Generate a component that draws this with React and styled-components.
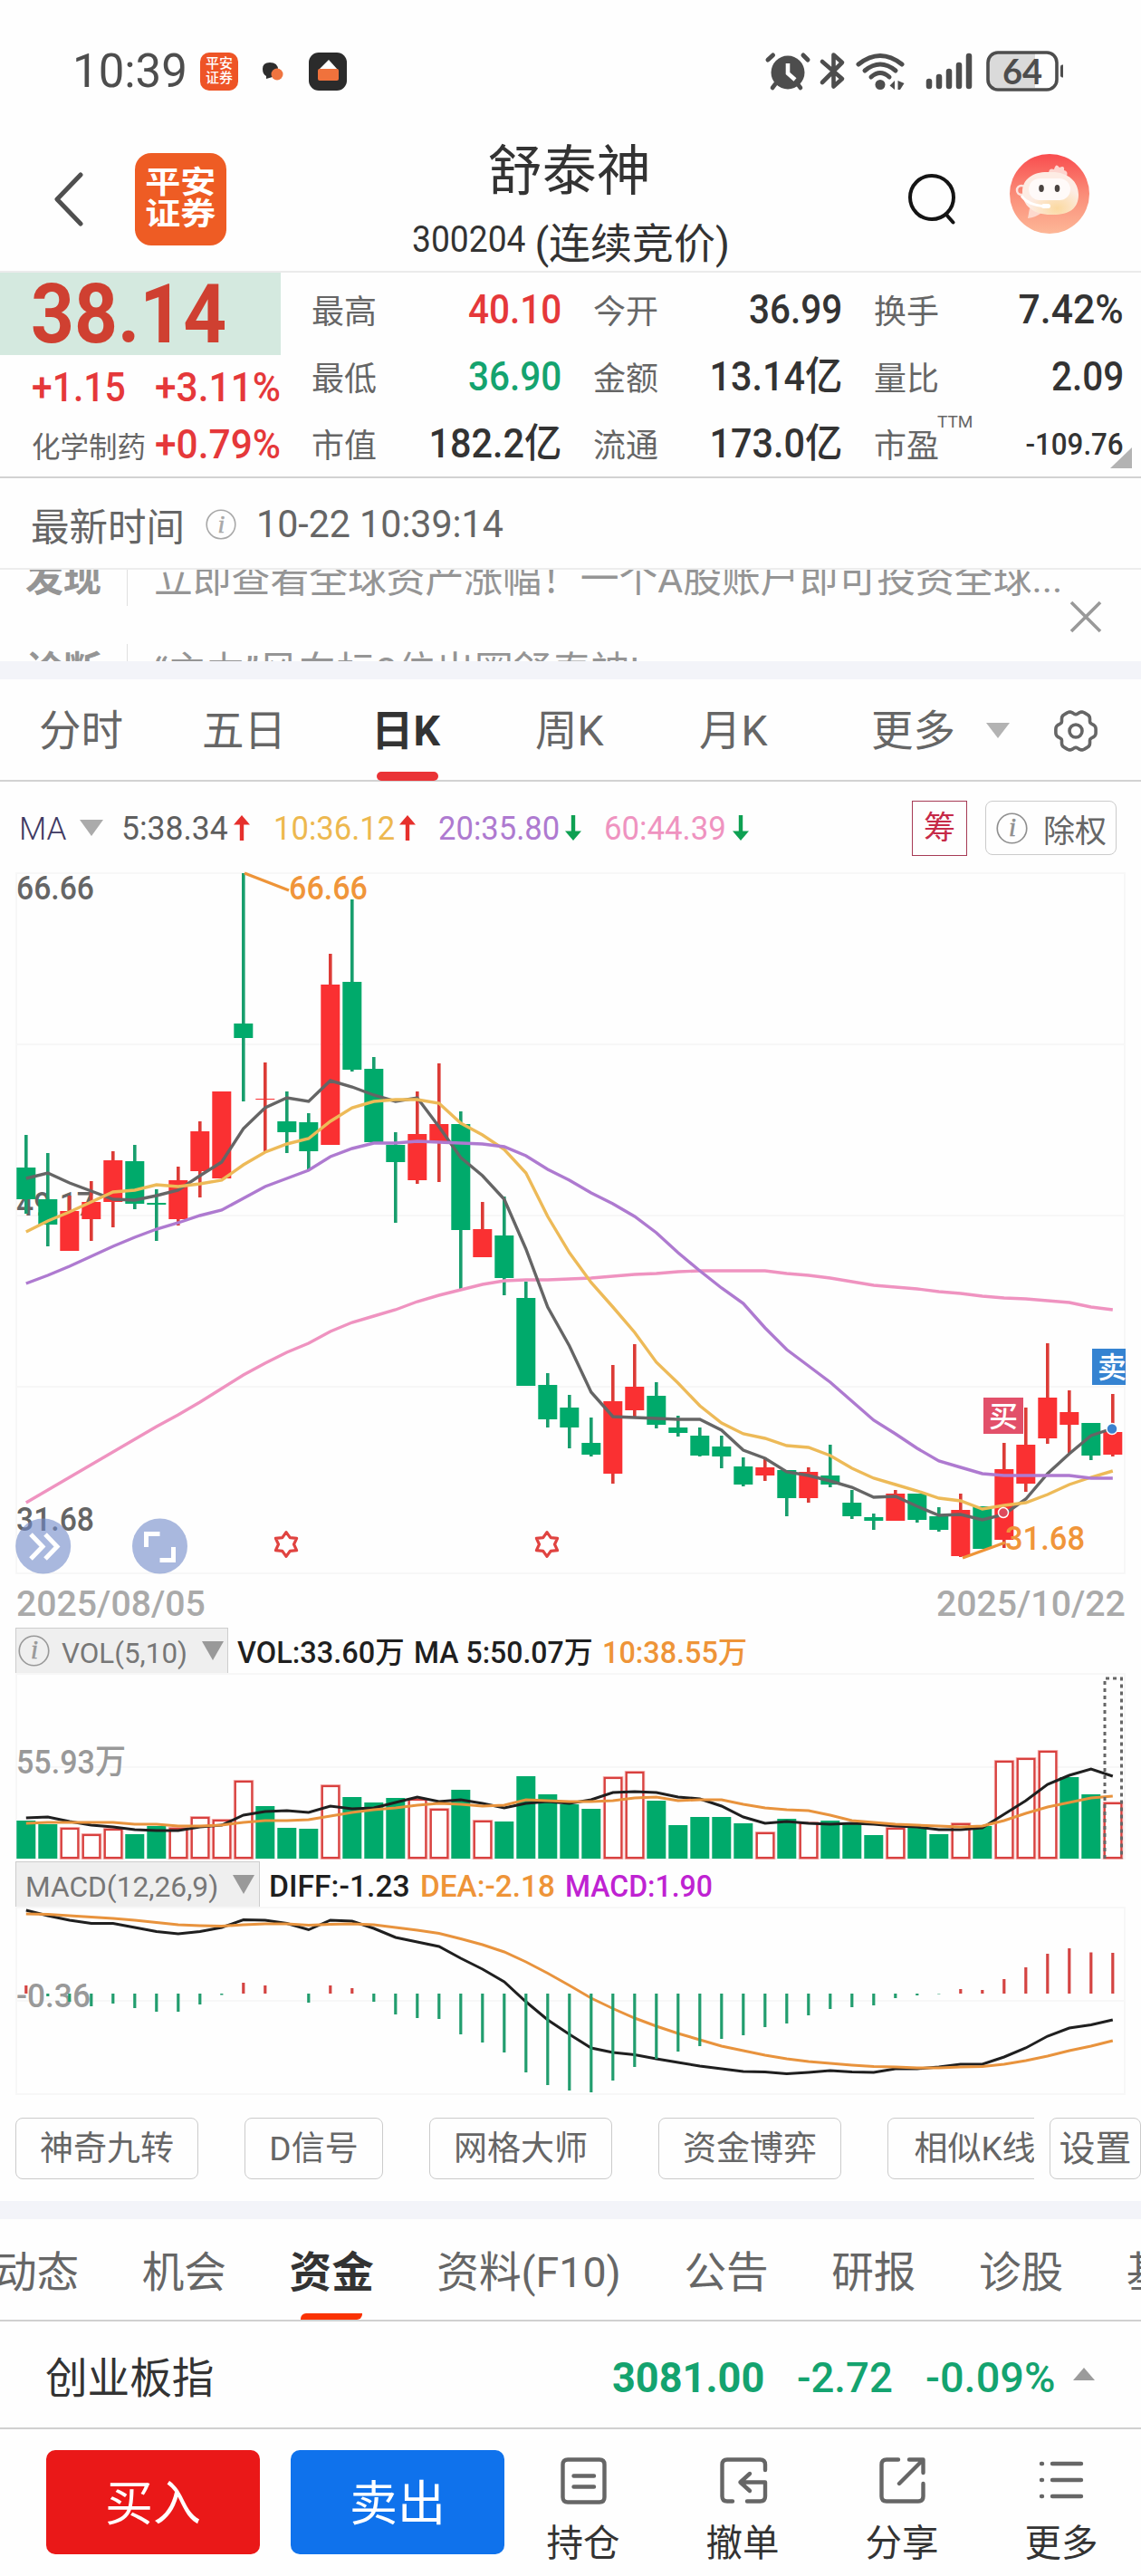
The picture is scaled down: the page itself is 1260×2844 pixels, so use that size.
import React from "react";
import styled, { createGlobalStyle } from "styled-components";

const GlobalStyle = createGlobalStyle`
  * {
    box-sizing: border-box;
  }

  body {
    margin: 0;
    background: #fefefe;
    font-family: Roboto, "Noto Sans CJK SC", sans-serif;
    color: #333;
    -webkit-font-smoothing: antialiased;
  }

  svg {
    display: block;
    flex-shrink: 0;
  }
`;

const UP = "#fa3032";
const DOWN = "#00aa6b";

const Screen = styled.div`
  width: 1260px;
  height: 2844px;
  overflow: hidden;
  display: flex;
  flex-direction: column;
  background: #fefefe;
  white-space: nowrap;

  & > * {
    flex-shrink: 0;
  }
`;

// Digits are drawn a little condensed, so the box is scaled from one side
const Figure = styled.span`
  display: inline-block;
  font-size: ${(p) => p.$size || 44}px;
  font-weight: ${(p) => p.$weight || 500};
  line-height: 1;
  color: ${(p) => p.$color || "#333"};
  transform: scaleX(${(p) => p.$fit || 0.92});
  transform-origin: ${(p) => p.$from || "left"} center;
`;

/* ---------- status bar ---------- */

const StatusBar = styled.div`
  height: 140px;
  padding: 18px 86px 0 80px;
  display: flex;
  align-items: center;
`;

const Clock = styled.div`
  width: 141px;
  font-size: 52px;
  line-height: 1;
  color: #4d4d4d;
`;

const AppIcons = styled.div`
  display: flex;
  gap: 18px;
  flex: 1;
`;

const AppBadge = styled.div`
  width: 42px;
  height: 42px;
  border-radius: 10px;
  padding-top: 4px;
  background: #ee5426;
  color: #fff;
  font-size: 15px;
  line-height: 16px;
  font-weight: 500;
  text-align: center;
`;

/* ---------- header ---------- */

const Header = styled.header`
  height: 161px;
  display: flex;
  align-items: center;
  border-bottom: 2px solid #ebebeb;
  padding: 0 57px 0 58px;
`;

const Logo = styled.div`
  width: 101px;
  height: 102px;
  margin-left: 56px;
  border-radius: 18px;
  background: #ee5c24;
  display: flex;
  align-items: center;
  justify-content: center;

  span {
    font-size: 39px;
    line-height: 41px;
    font-weight: 700;
    color: #fff;
    text-align: center;
    transform: scaleY(0.86);
  }
`;

const TitleBlock = styled.div`
  width: 756px;
  padding: 10px 0 0 5px;
  display: flex;
  flex-direction: column;
  align-items: center;
`;

const StockName = styled.h1`
  margin: 0;
  font-size: 60px;
  font-weight: 400;
  line-height: 80px;
  color: #333;
`;

const StockCode = styled.div`
  display: flex;
  align-items: center;
  height: 70px;
  font-size: 46px;
  padding-left: 4px;
  color: #333;
`;

const HeaderActions = styled.div`
  display: flex;
  align-items: center;
  gap: 58px;
`;

const AvatarBox = styled.div`
  padding-bottom: 11px;
`;

/* ---------- quote ---------- */

const Quote = styled.section`
  height: 227px;
  display: flex;
  border-bottom: 2px solid #d2d2d2;
`;

const PriceColumn = styled.div`
  width: 310px;
  display: flex;
  flex-direction: column;
`;

const Price = styled.div`
  height: 91px;
  padding: 3px 0 0 34px;
  display: flex;
  align-items: center;
  background: #d4e9df;
`;

const PriceLine = styled.div`
  display: flex;
  align-items: center;
  justify-content: space-between;
  height: ${(p) => p.$height}px;
  padding-left: 35px;
  font-size: 31.5px;
  color: #666;
`;

const Facts = styled.div`
  flex: 1;
  padding: 4px 19px 0 34px;
  display: grid;
  grid-template-columns: 276px 275px 276px;
  column-gap: 35px;
  grid-auto-rows: 74px;
`;

const Fact = styled.div`
  display: flex;
  align-items: center;
  justify-content: space-between;
`;

const FactLabel = styled.span`
  position: relative;
  font-size: 36px;
  color: #666;
  padding-bottom: 2px;
`;

const Superscript = styled.span`
  position: absolute;
  left: 70px;
  top: -9px;
  font-size: 19px;
`;

const Corner = styled.div`
  position: absolute;
  left: 1226px;
  top: 494px;
  border-left: 24px solid transparent;
  border-bottom: 23px solid #b3b3b3;
`;

const TimeRow = styled.div`
  height: 101px;
  display: flex;
  align-items: center;
  padding: 2px 0 0 34px;
  font-size: 42.5px;
  color: #666;
  border-bottom: 2px solid #ededed;
`;

/* ---------- notices ---------- */

const Notices = styled.div`
  height: 101px;
  overflow: hidden;
  display: flex;
  justify-content: space-between;
  color: #959595;
  font-size: 42.8px;
`;

const NoticeList = styled.div`
  margin-top: -41px;
`;

const Notice = styled.div`
  height: 102px;
  padding-left: 28px;
  display: flex;
  align-items: center;
  line-height: 80px;

  b {
    width: 112px;
    font-size: 42px;
    line-height: 60px;
  }

  span {
    border-left: 1px solid #e0e0e0;
    line-height: 60px;
    padding-left: 29px;
  }
`;

const CloseBox = styled.div`
  padding: 34px 43px 0 0;
`;

const Band = styled.div`
  height: ${(p) => p.$height || 20}px;
  background: #f3f4f9;
`;

/* ---------- period tabs ---------- */

const PeriodTabs = styled.nav`
  height: 113px;
  display: flex;
  border-bottom: 2px solid #d2d2d2;
  padding: 2px 0 0 43px;
  align-items: center;
`;

const PeriodTab = styled.div`
  position: relative;
  width: ${(p) => p.$width}px;
  font-size: 46.5px;
  line-height: 60px;
  color: ${(p) => (p.$active ? "#333" : "#666")};
  font-weight: ${(p) => (p.$active ? 700 : 400)};

  &::after {
    content: "";
    display: ${(p) => (p.$active ? "block" : "none")};
    position: absolute;
    left: 6px;
    bottom: -25px;
    width: 68px;
    height: 10px;
    border-radius: 5px;
    background: #ea3336;
  }
`;

const Triangle = styled.i`
  border: ${(p) => p.$half || 13}px solid transparent;
  border-bottom-width: 0;
  border-top: ${(p) => p.$tall || 17}px solid ${(p) => p.$color || "#b3b3b3"};
`;

/* ---------- moving averages ---------- */

const MaRow = styled.div`
  height: 101px;
  display: flex;
  align-items: center;
  padding: 1px 27px 0 21px;
`;

const MaName = styled.div`
  width: 67px;
  padding-top: 2px;
  font-size: 35px;
  font-weight: 300;
  color: #3f3a63;
`;

const MaItem = styled.div`
  display: flex;
  align-items: center;
  width: ${(p) => p.$width}px;

  span {
    width: ${(p) => p.$text}px;
  }
`;

const ChipButton = styled.div`
  margin-left: auto;
  width: 61px;
  height: 61px;
  border: 1.5px solid #a63a55;
  color: #c62a48;
  font-size: 35px;
  line-height: 59px;
  text-align: center;
`;

const AdjustButton = styled.div`
  margin-left: 20px;
  width: 145px;
  height: 60px;
  border: 1.5px solid #cbcbcb;
  border-radius: 8px;
  display: flex;
  align-items: center;
  justify-content: space-between;
  padding: 0 10px 0 11px;
  font-size: 35px;
  color: #666;
`;

/* ---------- charts ---------- */

const ChartBox = styled.div`
  height: ${(p) => p.$height}px;
  padding-left: 18px;
`;

const DateRow = styled.div`
  height: 60px;
  padding: 8px 17px 0 18px;
  display: flex;
  align-items: center;
  justify-content: space-between;
`;

const IndicatorRow = styled.div`
  height: 51px;
  padding-left: 17px;
  display: flex;
  align-items: center;
  margin-top: ${(p) => p.$top || 0}px;
`;

const IndicatorPicker = styled.div`
  width: ${(p) => p.$width}px;
  height: 51px;
  border: 1px solid #cdcdcd;
  background: #efefef;
  display: flex;
  align-items: center;
  padding-left: ${(p) => p.$pad}px;
  margin-right: 10px;
`;

const PickerText = styled.div`
  width: ${(p) => p.$width}px;
  height: 36px;
  padding-top: 4px;
`;

const IndicatorText = styled.div`
  width: ${(p) => p.$width}px;
  padding-top: 4px;
`;

/* ---------- tool buttons ---------- */

const Tools = styled.div`
  height: 118px;
  padding: 26px 0 0 17px;
  display: flex;
`;

const ToolList = styled.div`
  width: 1125px;
  overflow: hidden;
  display: flex;
  gap: 51px;
`;

const Tool = styled.div`
  height: 68px;
  flex: none;
  width: ${(p) => p.$width}px;
  border: 1.5px solid #cbcbcb;
  border-radius: 8px;
  font-size: 37px;
  line-height: 67px;
  text-align: center;
  color: #666;
`;

const SettingTool = styled(Tool)`
  margin-left: 17px;
  font-size: 40px;
`;

/* ---------- content tabs ---------- */

const ContentTabs = styled.nav`
  height: 113px;
  display: flex;
  align-items: center;
  gap: 69.6px;
  padding-top: 6px;
  margin-left: -6px;
  border-bottom: 2px solid #d0d0d0;
`;

const ContentTab = styled.div`
  position: relative;
  flex: none;
  font-size: 46.6px;
  line-height: 60px;
  color: ${(p) => (p.$active ? "#333" : "#666")};
  font-weight: ${(p) => (p.$active ? 700 : 400)};

  &::after {
    content: "";
    display: ${(p) => (p.$active ? "block" : "none")};
    position: absolute;
    left: 12px;
    bottom: -22px;
    width: 68px;
    height: 7px;
    border-radius: 6px 0 6px 0;
    background: #fa3203;
  }
`;

const IndexRow = styled.div`
  height: 119px;
  display: flex;
  align-items: center;
  padding: 0 51px 0 50px;
  border-bottom: 2px solid #d0d0d0;
  font-size: 46.6px;
`;

const IndexFigures = styled.div`
  margin-left: auto;
  display: flex;
  align-items: center;
  padding-top: 6px;
`;

const FigureSlot = styled.div`
  width: ${(p) => p.$width}px;
`;

const UpTriangle = styled.i`
  border: 12px solid transparent;
  border-top-width: 0;
  border-bottom: 14px solid #9b9b9b;
  margin-bottom: 8px;
`;

/* ---------- bottom bar ---------- */

const BottomBar = styled.footer`
  height: 162px;
  display: flex;
  padding: 23px 0 0 51px;
`;

const TradeButton = styled.div`
  width: 236px;
  height: 115px;
  margin-right: 34px;
  border-radius: 10px;
  background: ${(p) => p.$color};
  color: #fff;
  font-size: 53px;
  line-height: 121px;
  text-align: center;
`;

const Action = styled.div`
  width: 176px;
  display: flex;
  flex-direction: column;
  align-items: center;
  font-size: 40.5px;
  line-height: 60px;
  gap: 11px;
  padding-top: 8px;
`;

const Actions = styled.div`
  display: flex;
  margin-left: -35px;
`;

/* ---------- data ---------- */

// [up, high, low, bodyTop, bodyBottom], measured down from the top grid line
const candles = [
  [0, 289, 376, 325, 360], [0, 309, 412, 360, 388], [1, 356, 417, 373, 417], [1, 340, 406, 363, 382],
  [1, 307, 391, 317, 363], [0, 300, 371, 318, 365], [0, 349, 406, 364, 366], [1, 324, 389, 339, 382],
  [1, 274, 358, 285, 329], [1, 241, 337, 241, 337], [0, 0, 252, 166, 182], [1, 209, 308, 249, 250],
  [0, 241, 309, 274, 286], [0, 265, 328, 275, 307], [1, 89, 300, 123, 300], [0, 29, 219, 120, 217],
  [0, 203, 297, 216, 297], [0, 286, 386, 300, 319], [1, 241, 343, 288, 339], [1, 210, 341, 277, 298],
  [0, 263, 459, 277, 394], [1, 363, 424, 393, 424], [0, 357, 466, 400, 447], [0, 451, 566, 469, 566],
  [0, 552, 612, 565, 603], [0, 576, 635, 590, 612], [0, 601, 644, 629, 642], [1, 543, 674, 583, 663],
  [1, 520, 602, 567, 593], [0, 562, 613, 577, 609], [0, 599, 622, 612, 618], [0, 612, 644, 621, 643],
  [0, 621, 657, 633, 644], [0, 645, 677, 655, 675], [1, 645, 671, 656, 665], [0, 659, 710, 659, 690],
  [1, 656, 695, 661, 690], [0, 631, 678, 665, 675], [0, 681, 713, 695, 710], [0, 707, 725, 711, 715],
  [1, 681, 715, 685, 715], [0, 685, 717, 685, 714], [0, 700, 727, 710, 725], [1, 685, 755, 703, 754],
  [0, 699, 746, 699, 746], [1, 629, 745, 658, 736], [1, 590, 683, 631, 674], [1, 519, 630, 579, 624],
  [1, 571, 640, 595, 609], [0, 607, 648, 607, 643], [1, 575, 644, 617, 642],
];

const averages = [
  {
    color: "#ef93c0",
    values: [695, 681, 667, 653, 639, 625, 611, 598, 584, 569, 554, 541, 529, 519, 506, 496, 489, 482, 473, 466, 460, 454, 450, 449, 449, 448, 447, 445, 443, 442, 440, 439, 439, 439, 439, 442, 444, 447, 451, 455, 457, 459, 462, 464, 467, 469, 470, 472, 474, 479, 482],
  },
  {
    color: "#656565",
    values: [337, 331, 342, 351, 360, 361, 356, 350, 334, 319, 282, 259, 248, 252, 229, 236, 245, 252, 248, 280, 314, 334, 360, 415, 479, 522, 573, 600, 601, 602, 603, 603, 615, 637, 646, 661, 665, 671, 678, 689, 688, 699, 709, 708, 714, 708, 691, 663, 641, 621, 613],
  },
  {
    color: "#edba58",
    values: [396, 384, 374, 363, 352, 350, 344, 346, 343, 339, 322, 308, 299, 293, 274, 259, 252, 250, 250, 254, 276, 289, 305, 331, 379, 419, 452, 479, 507, 540, 563, 588, 607, 619, 624, 632, 634, 643, 657, 668, 675, 682, 690, 693, 702, 698, 695, 686, 675, 667, 660],
  },
  {
    color: "#ae7ad0",
    values: [453, 444, 434, 423, 412, 402, 393, 386, 378, 372, 359, 346, 337, 328, 313, 304, 298, 298, 296, 297, 298, 299, 302, 312, 327, 339, 353, 365, 379, 397, 419, 439, 458, 475, 502, 526, 544, 562, 583, 604, 619, 635, 649, 656, 663, 665, 665, 665, 665, 668, 668],
  },
];

// [up, height]
const volumes = [
  [0, 42], [0, 38], [1, 34], [1, 27], [1, 33], [0, 27], [0, 36], [1, 34], [1, 46], [1, 43], [1, 86], [0, 58], [0, 34],
  [0, 33], [1, 81], [0, 68], [0, 62], [0, 67], [1, 66], [1, 55], [0, 76], [1, 42], [0, 41], [0, 91], [0, 71], [0, 60],
  [0, 55], [1, 90], [1, 96], [0, 64], [0, 37], [0, 46], [0, 46], [0, 39], [1, 29], [0, 44], [1, 40], [0, 42], [0, 38],
  [0, 26], [1, 34], [0, 35], [0, 27], [1, 39], [0, 36], [1, 108], [1, 111], [1, 119], [0, 90], [0, 71], [1, 62],
];

const volMa5 = [45, 46, 41, 37, 35, 32, 31, 31, 35, 37, 48, 52, 53, 51, 58, 55, 56, 62, 68, 63, 65, 61, 56, 61, 63, 61, 65, 73, 74, 73, 68, 66, 58, 46, 39, 41, 39, 38, 39, 38, 36, 35, 32, 32, 34, 49, 64, 82, 92, 99, 91];
const volMa10 = [39, 40, 40, 40, 40, 38, 38, 36, 36, 37, 40, 42, 42, 43, 47, 51, 54, 56, 59, 61, 60, 58, 59, 65, 64, 63, 63, 64, 67, 68, 64, 65, 65, 60, 56, 54, 53, 48, 42, 40, 38, 37, 36, 35, 36, 42, 50, 57, 62, 67, 69];

const macdBars = [9, -3, -9, -14, -11, -16, -20, -20, -12, -1.5, 12, 9, 0, -10, 9, 6, -9, -23, -27, -28, -45, -54, -65, -87, -101, -107, -109, -96, -81, -72, -64, -58, -50, -46, -37, -33, -24, -17, -15, -13, -5, -2, -0.5, 5, 4, 16, 29, 44, 50, 45.5, 45];
const diff = [3, 9, 14, 17.5, 17.5, 22, 26.5, 29, 26.5, 22, 13.5, 14, 17.5, 24.5, 14, 15, 23, 33, 38, 43, 56, 68, 82, 104, 124, 140, 155, 160, 162.5, 167, 171, 175, 178, 181, 181.5, 183.5, 182, 180, 181.5, 182, 178, 178, 176, 173, 173, 165, 155, 142, 133, 129.5, 124];
const dea = [7, 7.5, 9, 10.5, 12, 14, 16.5, 19, 20, 20.5, 19, 18, 18, 19.5, 18.5, 18, 19, 22, 25, 28.5, 34.5, 41, 49, 60, 72.5, 86, 100, 111.5, 122, 131, 139, 146, 153, 158, 163, 167, 170, 172, 174, 175.5, 176, 177, 177, 176, 175.5, 173, 169, 164, 158, 153, 147];

const cx = (i) => 10.8 + i * 24;
const toPoints = (values, map = (v) => v) => values.map((v, i) => `${cx(i)},${map(v)}`).join(" ");

const facts = [
  { label: "最高", value: "40.10", color: "#e5383a" },
  { label: "今开", value: "36.99" },
  { label: "换手", value: "7.42%", fit: 0.97 },
  { label: "最低", value: "36.90", color: "#14a36f" },
  { label: "金额", value: "13.14亿", fit: 0.94 },
  { label: "量比", value: "2.09" },
  { label: "市值", value: "182.2亿", fit: 0.94 },
  { label: "流通", value: "173.0亿", fit: 0.94 },
  { label: "市盈", value: "-109.76", size: 34 },
];

/* ---------- icons ---------- */

function InfoIcon({ size = 35, color = "#a8a8a8" }) {
  return (
    <svg width={size} height={size} viewBox="0 0 34 34">
      <circle cx="17" cy="17" r="15.8" fill="none" stroke={color} strokeWidth="1.6" />
      <text x="17.5" y="25.5" textAnchor="middle" fontFamily="Liberation Serif, serif" fontStyle="italic" fontSize="28" fill={color} stroke={color} strokeWidth=".6">
        i
      </text>
    </svg>
  );
}

function Arrow({ up }) {
  return (
    <svg width="18" height="28" viewBox="0 0 18 28">
      <g transform={up ? "" : "rotate(180 9 14)"} fill={up ? "#e6302c" : "#0ea052"}>
        <path d="M9 0L18 10.500H0Z" />
        <rect x="6.800" y="8" width="4.400" height="20" />
      </g>
    </svg>
  );
}

function Star({ x, y }) {
  const pts = Array.from({ length: 12 }, (_, k) => {
    const r = k % 2 ? 8.5 : 13.4;
    const a = (k * Math.PI) / 6 - Math.PI / 2;
    return `${x + r * Math.cos(a)},${y + r * Math.sin(a)}`;
  }).join(" ");
  return <polygon points={pts} fill="#fff" stroke="#e04340" strokeWidth="3.2" strokeLinejoin="round" />;
}

function Gear() {
  const pts = Array.from({ length: 72 }, (_, k) => {
    const a = (k * Math.PI) / 36;
    const turn = 6 * (a - Math.PI / 2);
    const r = 20.9 - 1.9 * Math.cos(turn) - 0.7 * Math.cos(2 * turn);
    return `${24 + r * Math.cos(a)},${24 + r * Math.sin(a)}`;
  }).join(" ");
  return (
    <svg width="48" height="48" viewBox="0 0 48 48" fill="none" stroke="#666" strokeWidth="3.6" strokeLinejoin="round">
      <polygon points={pts} />
      <circle cx="24" cy="24" r="7" />
    </svg>
  );
}

function StatusIcons() {
  return (
    <svg width="330" height="46" viewBox="0 0 330 46" fill="#4d4d4d" stroke="none">
      <g fill="none" stroke="#4d4d4d" strokeWidth="4.6" strokeLinecap="round">
        <path d="M4 10L9.500 5M43 5L48 10" strokeWidth="5" />
        <path d="M9 41L12 37M40 41L37 37" />
      </g>
      <circle cx="26" cy="24" r="18.500" />
      <path d="M26 14V25L34 32" fill="none" stroke="#fff" strokeWidth="4.600" />
      <path d="M61 12L83 31L73.500 39.500V4.500L83 13L61 35" transform="translate(3 0)" fill="none" stroke="#4d4d4d" strokeWidth="4.600" strokeLinecap="round" strokeLinejoin="round" />
      <g fill="none" stroke="#4d4d4d" strokeWidth="5" strokeLinecap="round">
        <path d="M104 15Q128 -4 152 15" />
        <path d="M111 22Q128 8 145 22" />
        <path d="M118 29Q128 20 138 29" />
      </g>
      <circle cx="128" cy="37.500" r="5.500" />
      <path d="M144 33V43L138.500 38.500ZM147 33V43" />
      <path d="M147.500 33L154.500 36L150 43H147.500Z" />
      <g stroke="#4d4d4d" strokeWidth="6.500" strokeLinecap="round">
        <path d="M182 34V39M193 29V39M204 23V39M215 16V39M226 6V39" />
      </g>
      <path d="M256 3H299V41H256Q246 41 246 31V13Q246 3 256 3Z" fill="#dadada" />
      <rect x="247" y="2" width="76" height="41" rx="11" fill="none" stroke="#4d4d4d" strokeWidth="3.600" />
      <rect x="327" y="15.500" width="4.500" height="14" rx="2.200" />
      <text x="285" y="36.500" textAnchor="middle" fontFamily="Lato, sans-serif" fontWeight="700" fontSize="38">64</text>
    </svg>
  );
}

function Avatar() {
  return (
    <svg width="88" height="88" viewBox="0 0 88 88">
      <defs>
        <linearGradient id="avatarBg" x1="0" y1="0" x2="0" y2="1">
          <stop offset="0" stopColor="#f94c4e" />
          <stop offset=".5" stopColor="#fa8c78" />
          <stop offset="1" stopColor="#fdb797" />
        </linearGradient>
        <radialGradient id="avatarChin" cx=".62" cy=".85" r=".5">
          <stop offset="0" stopColor="#fbd9a0" />
          <stop offset="1" stopColor="#fdece4" />
        </radialGradient>
      </defs>
      <circle cx="44" cy="44" r="44" fill="url(#avatarBg)" />
      <path d="M43 22Q43 15 49 17Q51 9 55 15Q61 12 60 18Q65 19 63 25Z" fill="#fdd5cf" />
      <circle cx="13" cy="40" r="5" fill="none" stroke="#fde3de" strokeWidth="2.500" />
      <path d="M22 60L20 71Q29 70 35 65Z" fill="#fdd9cd" />
      <path d="M14 42C14 26 28 19 44 20C64 19 76 30 76 45C76 60 66 67 48 67C28 68 14 58 14 42Z" fill="url(#avatarChin)" />
      <rect x="21" y="27" width="46" height="24" rx="12" fill="#fffaf9" />
      <path d="M13 46C18 54 28 57 40 58" fill="none" stroke="#fff" strokeWidth="3" />
      <rect x="35" y="55" width="10" height="5" rx="2.500" fill="#fff" />
      <ellipse cx="35" cy="38" rx="2.800" ry="4" fill="#4a4340" />
      <ellipse cx="52.500" cy="38" rx="2.800" ry="4" fill="#4a4340" />
    </svg>
  );
}

const actionPaths = {
  持仓: "M8 2.500H43Q48.500 2.500 48.500 8V44Q48.500 49.500 43 49.500H8Q2.500 49.500 2.500 44V8Q2.500 2.500 8 2.500ZM14.500 20.500H37M14.500 32.500H37",
  撤单: "M50 14V8Q50 2.500 44.500 2.500H8Q2.500 2.500 2.500 8V43Q2.500 48.500 8 48.500H14M30 48.500H44.500Q50 48.500 50 43V27.500H22.500M33 18L22.500 27.500L33 37",
  分享: "M21 2.500H8Q2.500 2.500 2.500 8V43Q2.500 48.500 8 48.500H43Q48.500 48.500 48.500 43V29M33 2.500H48.500V17M48 3L22 29",
  更多: "M3 7H4M3 25H4M3 43H4M15 7H47M15 25H47M15 43H47",
};

/* ---------- charts ---------- */

function Grid({ height, lines }) {
  return (
    <g fill="none" stroke="#f7f7f7" strokeWidth="2">
      <rect x="0" y="0" width="1224" height={height} />
      {lines.map((y) => (
        <line key={y} x1="0" x2="1224" y1={y} y2={y} />
      ))}
    </g>
  );
}

function Label({ x, y, width, size = 37, color = "#656565", children }) {
  return (
    <text x={x} y={y} fontSize={size} fontWeight="500" fill={color} textLength={width} lengthAdjust="spacingAndGlyphs">
      {children}
    </text>
  );
}

function KLineChart() {
  return (
    <svg width="1224" height="773" viewBox="0 0 1224 773" overflow="visible">
      <Grid height={773} lines={[189, 378, 567]} />
      <Label x={0} y={28.500} width={86}>66.66</Label>
      <Label x={0} y={378} width={86}>49.17</Label>
      <Label x={0} y={726} width={86}>31.68</Label>
      {candles.map(([up, high, low, top, bottom], i) => (
        <g key={i}>
          <rect x={cx(i) - 1.8} y={high} width="3.6" height={low - high} fill={up ? "#dc3b36" : "#189e6d"} />
          <rect x={cx(i) - 10.5} y={top} width="21" height={bottom - top} fill={up ? UP : DOWN} />
        </g>
      ))}
      {averages.map((line) => (
        <polyline key={line.color} points={toPoints(line.values)} fill="none" stroke={line.color} strokeWidth="3.4" />
      ))}
      <path d="M252 0L301 19M1045 756L1092 739" stroke="#ee9438" strokeWidth="3.4" />
      <Label x={301} y={28.500} width={87} color="#f0953a">66.66</Label>
      <Label x={1092} y={747} width={88} color="#f0953a">31.68</Label>
      <g fill="#6f88c8" fillOpacity=".6">
        <circle cx="29.700" cy="743" r="30.500" />
        <circle cx="158.500" cy="743" r="30.500" />
      </g>
      <path
        d="M16 730L29 743.500L16 757M32 730L45 743.500L32 757M143.500 744V729.500H158.500M158.500 758.500H173.500V744"
        fill="none"
        stroke="#fff"
        strokeWidth="5"
      />
      <Star x={298} y={741} />
      <Star x={586} y={741} />
      <circle cx="1090" cy="706" r="5.500" fill="#dd4a5c" stroke="#fff" strokeWidth="1.500" />
      <circle cx="1210" cy="613.500" r="6" fill="#3b82cf" stroke="#fff" strokeWidth="1.500" />
      <rect x="1068" y="579" width="44" height="40" fill="#e2506a" />
      <text x="1090" y="611" textAnchor="middle" fontSize="32" fontWeight="500" fill="#fff">买</text>
      <rect x="1188" y="525" width="37" height="40" fill="#3583d1" />
      <text x="1210" y="557" textAnchor="middle" fontSize="32" fontWeight="500" fill="#fff">卖</text>
    </svg>
  );
}

function VolumeChart() {
  return (
    <svg width="1224" height="204" viewBox="0 0 1224 204" overflow="visible">
      <Grid height={204} lines={[103]} />
      <Label x={0} y={110} width={121} color="#999">55.93万</Label>
      {volumes.map(([up, h], i) =>
        up ? (
          <g key={i} fill="#fff">
            <rect x={cx(i) - 9} y={205 - h} width="18.5" height={h - 2} stroke="#f6b3b1" strokeWidth="4" />
            <rect x={cx(i) - 9} y={205 - h} width="18.5" height={h - 2} stroke="#d8413f" strokeWidth="2.2" />
          </g>
        ) : (
          <rect key={i} x={cx(i) - 10.5} y={204 - h} width="21" height={h} fill={DOWN} />
        )
      )}
      <polyline points={toPoints(volMa5, (v) => 204 - v)} fill="none" stroke="#1f1f1f" strokeWidth="3" />
      <polyline points={toPoints(volMa10, (v) => 204 - v)} fill="none" stroke="#e8933d" strokeWidth="3" />
      <path d="M1202 204V5H1220.500V204" fill="none" stroke="#666" strokeWidth="3" strokeDasharray="4 4" />
    </svg>
  );
}

function MacdChart() {
  return (
    <svg width="1224" height="206" viewBox="0 0 1224 206" overflow="visible">
      <Grid height={206} lines={[103]} />
      <Label x={0} y={110} width={82} color="#999">-0.36</Label>
      <polyline points={toPoints(diff)} fill="none" stroke="#1f1f1f" strokeWidth="3" />
      <polyline points={toPoints(dea)} fill="none" stroke="#e8933d" strokeWidth="3" />
      {macdBars.map((v, i) => (
        <rect key={i} x={cx(i) - 1.6} y={v > 0 ? 95 - v : 95} width="3.2" height={Math.abs(v)} fill={v > 0 ? "#d44442" : "#229d6e"} />
      ))}
    </svg>
  );
}

export default function App() {
  return (
    <>
      <GlobalStyle />
      <Screen>
        <StatusBar>
          <Clock>
            <Figure $size={52} $weight={400} $color="#4d4d4d" $fit={0.98}>10:39</Figure>
          </Clock>
          <AppIcons>
            <AppBadge>平安<br />证券</AppBadge>
            <svg width="42" height="42" viewBox="0 0 42 42">
              <path d="M9 18Q9 11 17 11Q26 11 26 19Q26 26 20 27L13 29V26Q9 24 9 18Z" fill="#2d2d2d" />
              <circle cx="25" cy="24" r="6.500" fill="#ef7440" />
            </svg>
            <svg width="42" height="42" viewBox="0 0 42 42">
              <rect width="42" height="42" rx="11" fill="#2b2b2b" />
              <path d="M11 19L22 8L32 19Z" fill="#fff" />
              <rect x="10" y="18" width="23" height="13" rx="2" fill="#f0723c" />
            </svg>
          </AppIcons>
          <StatusIcons />
        </StatusBar>

        <Header>
          <svg width="35" height="60" viewBox="0 0 35 60">
            <path d="M31 3L5 30L31 57" fill="none" stroke="#4f4f4f" strokeWidth="5" strokeLinecap="round" strokeLinejoin="round" />
          </svg>
          <Logo>
            <span>平安<br />证券</span>
          </Logo>
          <TitleBlock>
            <StockName>舒泰神</StockName>
            <StockCode>
              <Figure $size={40} $weight={400} $fit={0.93}>300204</Figure>
              (连续竞价)
            </StockCode>
          </TitleBlock>
          <HeaderActions>
            <svg width="54" height="56" viewBox="0 0 54 56" fill="none" stroke="#141414" strokeWidth="4" strokeLinecap="round">
              <circle cx="26" cy="26" r="24" />
              <path d="M42 45L49.500 53.500" />
            </svg>
            <AvatarBox>
              <Avatar />
            </AvatarBox>
          </HeaderActions>
        </Header>

        <Quote>
          <PriceColumn>
            <Price>
              <Figure $size={90} $weight={700} $color="#cf4031" $fit={0.93}>38.14</Figure>
            </Price>
            <PriceLine $height={72}>
              <Figure $color="#e5383a" $fit={0.93}>+1.15</Figure>
              <Figure $color="#e5383a" $from="right" $fit={0.965}>+3.11%</Figure>
            </PriceLine>
            <PriceLine $height={54}>
              化学制药
              <Figure $color="#e5383a" $from="right" $fit={0.965}>+0.79%</Figure>
            </PriceLine>
          </PriceColumn>
          <Facts>
            {facts.map(({ label, value, color, size, fit }) => (
              <Fact key={label}>
                <FactLabel>
                  {label}
                  {label === "市盈" && <Superscript>TTM</Superscript>}
                </FactLabel>
                <Figure $color={color} $size={size} $fit={fit} $from="right">
                  {value}
                </Figure>
              </Fact>
            ))}
          </Facts>
          <Corner />
        </Quote>

        <TimeRow>
          最新时间
          <svg width="23" height="1" />
          <InfoIcon size={34} />
          <svg width="22" height="1" />
          <Figure $size={42} $weight={400} $color="#666" $fit={0.98}>10-22 10:39:14</Figure>
        </TimeRow>

        <Notices>
          <NoticeList>
            <Notice>
              <b>发现</b>
              <span>立即查看全球资产涨幅！一个A股账户即可投资全球...</span>
            </Notice>
            <Notice>
              <b>诊断</b>
              <span>“主力”风向标8位出圈舒泰神!</span>
            </Notice>
          </NoticeList>
          <CloseBox>
            <svg width="36" height="36" viewBox="0 0 36 36">
              <path d="M2 2L34 34M34 2L2 34" stroke="#999" strokeWidth="3.6" />
            </svg>
          </CloseBox>
        </Notices>
        <Band />

        <PeriodTabs>
          <PeriodTab $width={180}>分时</PeriodTab>
          <PeriodTab $width={187}>五日</PeriodTab>
          <PeriodTab $width={181} $active>日K</PeriodTab>
          <PeriodTab $width={181}>周K</PeriodTab>
          <PeriodTab $width={190}>月K</PeriodTab>
          <PeriodTab $width={127}>更多</PeriodTab>
          <Triangle />
          <svg width="49" height="1" />
          <Gear />
        </PeriodTabs>

        <MaRow>
          <MaName>MA</MaName>
          <Triangle $half={13} $tall={18} $color="#ababab" />
          <svg width="20" height="1" />
          <MaItem $width={168} $text={124}>
            <Figure $size={37} $weight={400} $color="#5e5e5e" $fit={0.96}>5:38.34</Figure>
            <Arrow up />
          </MaItem>
          <MaItem $width={182} $text={139}>
            <Figure $size={37} $weight={400} $color="#edb84f" $fit={0.935}>10:36.12</Figure>
            <Arrow up />
          </MaItem>
          <MaItem $width={183} $text={140}>
            <Figure $size={37} $weight={400} $color="#ae7ad0" $fit={0.935}>20:35.80</Figure>
            <Arrow />
          </MaItem>
          <MaItem $width={170} $text={142}>
            <Figure $size={37} $weight={400} $color="#ef93c0" $fit={0.94}>60:44.39</Figure>
            <Arrow />
          </MaItem>
          <ChipButton>筹</ChipButton>
          <AdjustButton>
            <InfoIcon color="#8f8f8f" />
            除权
          </AdjustButton>
        </MaRow>

        <ChartBox $height={773}>
          <KLineChart />
        </ChartBox>
        <DateRow>
          <Figure $size={39} $color="#aaa" $fit={1.005}>2025/08/05</Figure>
          <Figure $size={39} $color="#aaa" $fit={1.005} $from="right">2025/10/22</Figure>
        </DateRow>

        <IndicatorRow>
          <IndicatorPicker $width={235} $pad={2}>
            <InfoIcon color="#999" />
            <svg width="13" height="1" />
            <PickerText $width={155}>
              <Figure $size={32} $weight={400} $color="#777" $fit={0.98}>VOL(5,10)</Figure>
            </PickerText>
            <Triangle $half={12} $tall={21} $color="#999" />
          </IndicatorPicker>
          <IndicatorText $width={195}>
            <Figure $size={33} $color="#1f1f1f" $fit={0.985}>VOL:33.60万</Figure>
          </IndicatorText>
          <IndicatorText $width={208}>
            <Figure $size={33} $color="#1f1f1f" $fit={0.97}>MA 5:50.07万</Figure>
          </IndicatorText>
          <IndicatorText>
            <Figure $size={33} $color="#ee9438" $fit={0.98}>10:38.55万</Figure>
          </IndicatorText>
        </IndicatorRow>
        <ChartBox $height={204}>
          <VolumeChart />
        </ChartBox>

        <IndicatorRow $top={3}>
          <IndicatorPicker $width={270} $pad={10}>
            <PickerText $width={229}>
              <Figure $size={32} $weight={400} $color="#777" $fit={0.99}>MACD(12,26,9)</Figure>
            </PickerText>
            <Triangle $half={12} $tall={21} $color="#999" />
          </IndicatorPicker>
          <IndicatorText $width={167}>
            <Figure $size={33} $color="#1f1f1f" $fit={1.02}>DIFF:-1.23</Figure>
          </IndicatorText>
          <IndicatorText $width={160}>
            <Figure $size={33} $color="#ee9438" $fit={1.01}>DEA:-2.18</Figure>
          </IndicatorText>
          <IndicatorText>
            <Figure $size={33} $color="#bf22d2" $fit={0.97}>MACD:1.90</Figure>
          </IndicatorText>
        </IndicatorRow>
        <ChartBox $height={206}>
          <MacdChart />
        </ChartBox>

        <Tools>
          <ToolList>
            <Tool $width={202}>神奇九转</Tool>
            <Tool $width={153}>D信号</Tool>
            <Tool $width={202}>网格大师</Tool>
            <Tool $width={202}>资金博弈</Tool>
            <Tool $width={193}>相似K线</Tool>
          </ToolList>
          <SettingTool $width={101}>设置</SettingTool>
        </Tools>
        <Band />

        <ContentTabs>
          <ContentTab>动态</ContentTab>
          <ContentTab>机会</ContentTab>
          <ContentTab $active>资金</ContentTab>
          <ContentTab>资料(F10)</ContentTab>
          <ContentTab>公告</ContentTab>
          <ContentTab>研报</ContentTab>
          <ContentTab>诊股</ContentTab>
          <ContentTab>基金</ContentTab>
        </ContentTabs>

        <IndexRow>
          创业板指
          <IndexFigures>
            <FigureSlot $width={204}>
              <Figure $size={46} $weight={700} $color="#14a36f" $fit={0.98}>3081.00</Figure>
            </FigureSlot>
            <FigureSlot $width={142}>
              <Figure $size={46} $color="#14a36f" $fit={0.99}>-2.72</Figure>
            </FigureSlot>
            <FigureSlot $width={163}>
              <Figure $size={46} $color="#14a36f" $fit={1.02}>-0.09%</Figure>
            </FigureSlot>
            <UpTriangle />
          </IndexFigures>
        </IndexRow>

        <BottomBar>
          <TradeButton $color="#ea1818">买入</TradeButton>
          <TradeButton $color="#0f72ec">卖出</TradeButton>
          <Actions>
            {Object.keys(actionPaths).map((name) => (
              <Action key={name}>
                <svg width="51" height="54" viewBox="0 0 51 54" overflow="visible">
                  <path d={actionPaths[name]} fill="none" stroke="#666" strokeWidth="4.4" strokeLinecap="round" strokeLinejoin="round" />
                </svg>
                {name}
              </Action>
            ))}
          </Actions>
        </BottomBar>
      </Screen>
    </>
  );
}
